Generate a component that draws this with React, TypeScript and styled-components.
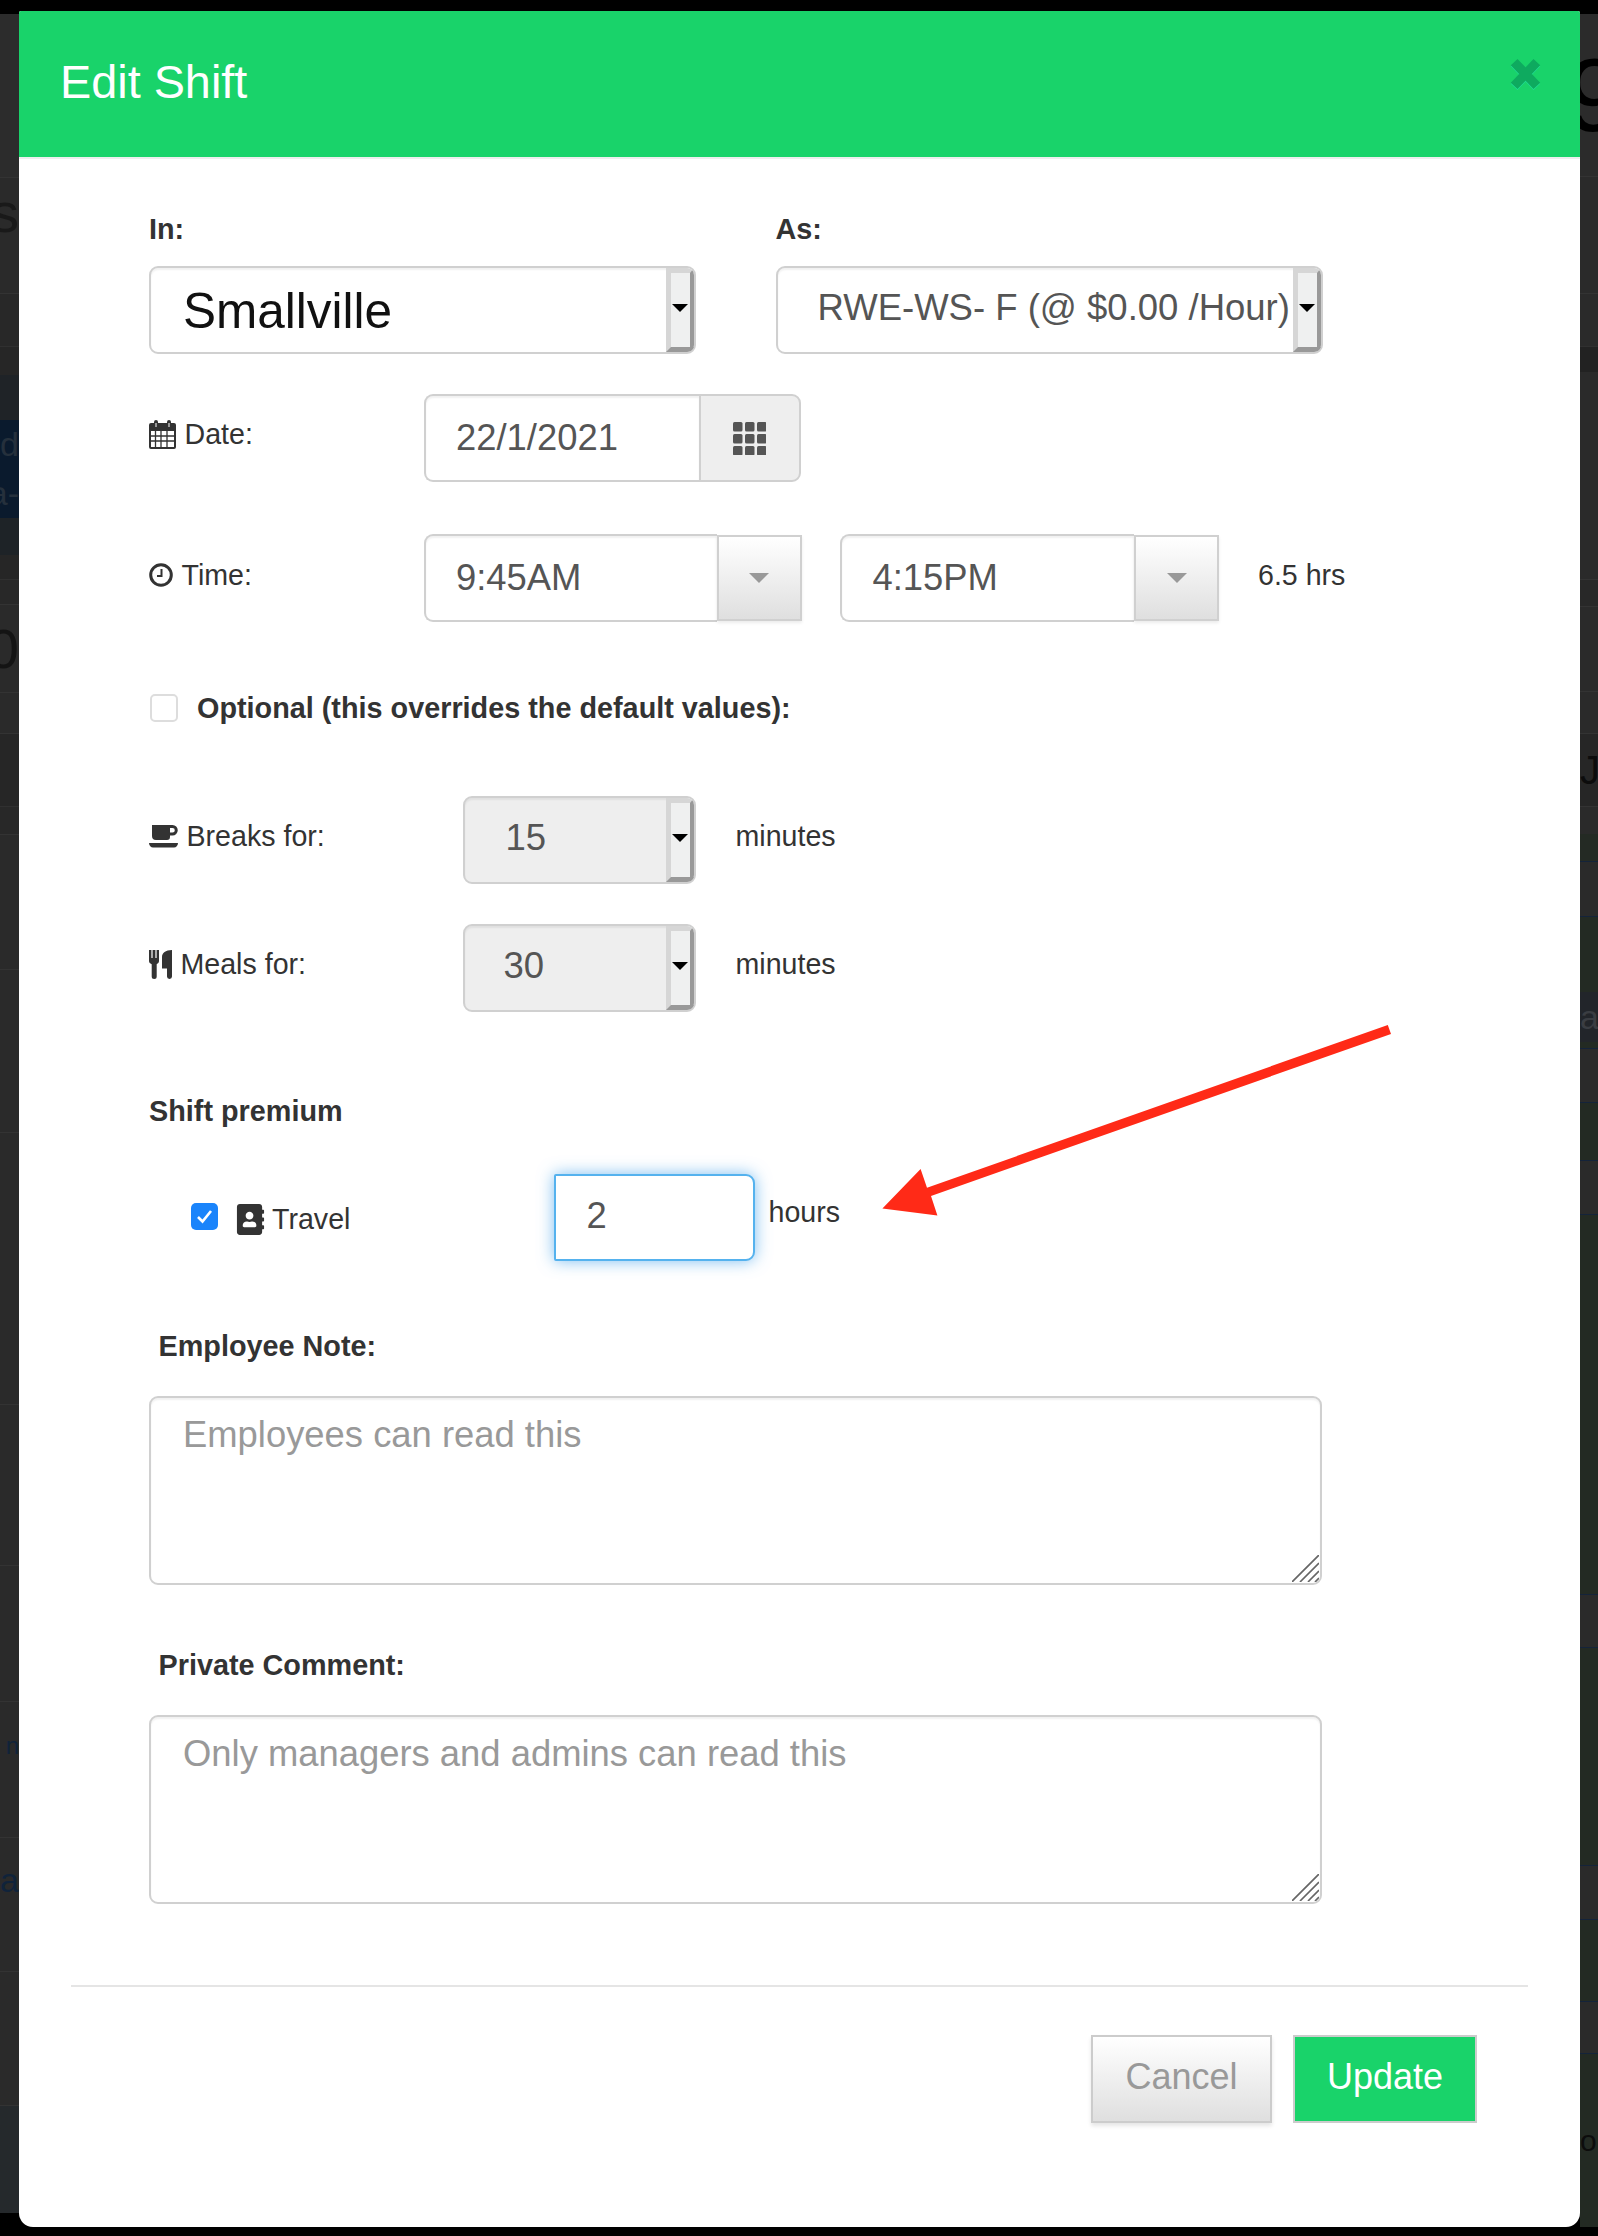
import React from "react";
import styled, { createGlobalStyle } from "styled-components";
import { FaAddressBook } from "react-icons/fa";

type StripRowData = { end: number; bg: string; text?: string; ink?: string; size?: number; line?: string; shift?: number };

const leftRows: StripRowData[] = [
  { end: 14, bg: "#000" },
  { end: 178, bg: "#2c2c2c", line: "#333" },
  { end: 248, bg: "#2a2a2a", text: "s", ink: "#191919" },
  { end: 294, bg: "#2a2a2a", line: "#333" },
  { end: 347, bg: "#282828", line: "#303030" },
  { end: 375, bg: "#262626" },
  { end: 420, bg: "#1f2327" },
  { end: 468, bg: "#0a1a2d", text: "d", ink: "#25303c", size: 34, shift: -8 },
  { end: 518, bg: "#0a1a2d", text: "a-", ink: "#25303c", size: 34, shift: -8 },
  { end: 555, bg: "#1e2327" },
  { end: 580, bg: "#262626", line: "#303030" },
  { end: 605, bg: "#282828", line: "#333" },
  { end: 693, bg: "#2a2a2a", text: "0", ink: "#141414", line: "#333" },
  { end: 734, bg: "#2a2a2a", line: "#333" },
  { end: 807, bg: "#262626", line: "#303030" },
  { end: 835, bg: "#282828", line: "#333" },
  { end: 970, bg: "#2a2a2a", line: "#333" },
  { end: 1133, bg: "#2a2a2a", line: "#333" },
  { end: 1405, bg: "#2a2a2a", line: "#333" },
  { end: 1566, bg: "#2a2a2a", line: "#333" },
  { end: 1702, bg: "#2a2a2a", line: "#333" },
  { end: 1790, bg: "#2a2a2a", text: "n", ink: "#10233a", size: 24 },
  { end: 1838, bg: "#2a2a2a", line: "#333" },
  { end: 1922, bg: "#2a2a2a", text: "a", ink: "#10233a", size: 34 },
  { end: 1972, bg: "#2a2a2a", line: "#333" },
  { end: 2106, bg: "#2a2a2a", line: "#333" },
  { end: 2213, bg: "#25292c" },
  { end: 2236, bg: "#000" },
];

const rightRows: StripRowData[] = [
  { end: 14, bg: "#000" },
  { end: 177, bg: "#2b2b2b", text: "9", ink: "#000", size: 104, line: "#333", shift: -14 },
  { end: 294, bg: "#2a2a2a", line: "#333" },
  { end: 347, bg: "#2a2a2a", line: "#303030" },
  { end: 372, bg: "#222" },
  { end: 580, bg: "#2a2a2a", line: "#333" },
  { end: 607, bg: "#282828", line: "#333" },
  { end: 692, bg: "#2a2a2a", line: "#333" },
  { end: 734, bg: "#2a2a2a", line: "#333" },
  { end: 807, bg: "#262626", text: "J", ink: "#0c0c0c", size: 40, line: "#333" },
  { end: 834, bg: "#2a2a2a" },
  { end: 862, bg: "#242a24", line: "#14233a" },
  { end: 917, bg: "#2a2a2a", line: "#14233a" },
  { end: 992, bg: "#232a23" },
  { end: 1042, bg: "#22252a", text: "a", ink: "#3a3d42", size: 34 },
  { end: 1049, bg: "#232a23", line: "#14233a" },
  { end: 1103, bg: "#2a2a2a", line: "#14233a" },
  { end: 1161, bg: "#232a23", line: "#14233a" },
  { end: 1215, bg: "#2a2a2a", line: "#14233a" },
  { end: 1537, bg: "#232a23" },
  { end: 1595, bg: "#232a23", line: "#14233a" },
  { end: 1648, bg: "#2a2a2a", line: "#14233a" },
  { end: 1866, bg: "#232a23", line: "#14233a" },
  { end: 1920, bg: "#2a2a2a", line: "#14233a" },
  { end: 2002, bg: "#232a23", line: "#14233a" },
  { end: 2054, bg: "#2a2a2a", line: "#14233a" },
  { end: 2227, bg: "#232a23", text: "o", ink: "#0c0c0c", size: 30 },
  { end: 2236, bg: "#000" },
];

const BackgroundStrip: React.FC<{ rows: StripRowData[]; side: "left" | "right" }> = ({ rows, side }) => (
  <Strip $side={side}>
    {rows.map((row, i) => (
      <StripRow
        key={row.end}
        $h={row.end - (i === 0 ? 0 : rows[i - 1].end)}
        $bg={row.bg}
        $line={row.line}
        $side={side}
      >
        {row.text && (
          <StripText $ink={row.ink || "#111"} $size={row.size || 56} $shift={row.shift || 0}>
            {row.text}
          </StripText>
        )}
      </StripRow>
    ))}
  </Strip>
);

const CalendarIcon = () => (
  <IconSvg $w={27} $h={29} viewBox="0 0 27 29">
    <path
      fill="#333"
      fillRule="evenodd"
      d="M2 3h3V2a2 2 0 0 1 4 0v1h9V2a2 2 0 0 1 4 0v1h3a2 2 0 0 1 2 2v22a2 2 0 0 1-2 2H2a2 2 0 0 1-2-2V5a2 2 0 0 1 2-2Zm0 8v16h23V11Z"
    />
    <path stroke="#333" strokeWidth="1.3" d="M1 16h25M1 21h25M6.5 11v17M12 11v17M18 11v17" />
    <path stroke="#fff" strokeWidth="1" d="M7 3v4M20 3v4" />
  </IconSvg>
);

const ClockIcon = () => (
  <IconSvg $w={24} $h={24} viewBox="0 0 24 24">
    <circle cx="12" cy="12" r="10.3" fill="none" stroke="#333" strokeWidth="3" />
    <path d="M12.5 6v7H8" fill="none" stroke="#333" strokeWidth="2" />
  </IconSvg>
);

const CoffeeIcon = () => (
  <IconSvg $w={29} $h={23} viewBox="0 0 29 23">
    <path
      fill="#333"
      fillRule="evenodd"
      d="M3 0h20.5a5 5 0 0 1 0 10.5H21V12a3 3 0 0 1-3 3H7a4 4 0 0 1-4-4Zm18 3v4.6h2.5a2.3 2.3 0 0 0 0-4.6Z"
    />
    <path fill="#333" d="M0 18h29c0 2.5-2 4.5-4 4.5H4c-2 0-4-2-4-4.5Z" />
  </IconSvg>
);

const MealsIcon = () => (
  <IconSvg $w={23} $h={29} viewBox="0 0 23 29">
    <path
      fill="#333"
      d="M0 0h2.4v8h1.2V0h2.8v8h1.200V0H10v11c0 1.500-1 2.500-2.300 3.200V26.500a2.500 2.500 0 0 1-5 0V14.200C1 13.500 0 12.500 0 11Z"
    />
    <path fill="#333" d="M23 0v26.500a2.500 2.500 0 0 1-5 0V18.500h-5V7c0-4 3.500-7 10-7Z" />
  </IconSvg>
);

const GridIcon = () => (
  <IconSvg $w={33} $h={33} viewBox="0 0 33 33">
    {[0, 12, 24].map((y) =>
      [0, 12, 24].map((x) => <rect key={`${x}-${y}`} x={x} y={y} width="9.5" height="9.5" rx="1.5" fill="#555" />)
    )}
  </IconSvg>
);

const ResizeGrip = () => (
  <Grip viewBox="0 0 27 27">
    <path stroke="#666" strokeWidth="1.7" d="M0 27 27 0M8 27 27 8M16 27 27 16M23 27l4-4" />
  </Grip>
);

const Select: React.FC<{ text: string; muted?: boolean; big?: boolean; width: number; inset: number }> = ({
  text,
  muted,
  big,
  width,
  inset,
}) => (
  <SelectBox $muted={muted} $width={width}>
    <SelectText $big={big} $inset={inset}>
      {text}
    </SelectText>
    <Spinner />
  </SelectBox>
);

const TimePicker: React.FC<{ value: string; width: number }> = ({ value, width }) => (
  <InputGroup>
    <InputField $width={width}>{value}</InputField>
    <DropButton>
      <Caret />
    </DropButton>
  </InputGroup>
);

export default function App() {
  return (
    <>
      <GlobalStyle />
      <Page>
        <BackgroundStrip rows={leftRows} side="left" />
        <Modal>
          <Header>
            <Title>Edit Shift</Title>
            <CloseIcon viewBox="0 0 30 31">
              <path d="M4 4l22 23M26 4 4 27" stroke="#0eaa5f" strokeWidth="9" fill="none" />
            </CloseIcon>
          </Header>
          <Form>
            <SelectRow>
              <SelectColumn>
                <BoldLabel>In:</BoldLabel>
                <Select text="Smallville" big width={547} inset={32} />
              </SelectColumn>
              <SelectColumn>
                <BoldLabel>As:</BoldLabel>
                <Select text="RWE-WS- F (@ $0.00 /Hour)" width={547} inset={40} />
              </SelectColumn>
            </SelectRow>

            <Row $top={40} $h={88}>
              <FieldLabel $w={274.5} $lift={8}>
                <CalendarIcon />
                Date:
              </FieldLabel>
              <InputGroup>
                <InputField $width={275}>22/1/2021</InputField>
                <AddOn>
                  <GridIcon />
                </AddOn>
              </InputGroup>
            </Row>

            <Row $top={52} $h={88}>
              <FieldLabel $w={274.5} $lift={6}>
                <ClockIcon />
                Time:
              </FieldLabel>
              <TimePicker value="9:45AM" width={293} />
              <TimeGap />
              <TimePicker value="4:15PM" width={294} />
              <Note $left={39} $lift={6}>
                6.5 hrs
              </Note>
            </Row>

            <Row $top={66} $h={40}>
              <EmptyCheck />
              <OptionalText>Optional (this overrides the default values):</OptionalText>
            </Row>

            <Row $top={68} $h={88}>
              <FieldLabel $w={313.5} $lift={8}>
                <CoffeeIcon />
                Breaks for:
              </FieldLabel>
              <Select text="15" muted width={233} inset={41} />
              <Note $left={40} $lift={8}>
                minutes
              </Note>
            </Row>

            <Row $top={40} $h={88}>
              <FieldLabel $w={313.5} $lift={8}>
                <MealsIcon />
                Meals for:
              </FieldLabel>
              <Select text="30" muted width={233} inset={39} />
              <Note $left={40} $lift={8}>
                minutes
              </Note>
            </Row>

            <Row $top={79} $h={40}>
              <BoldLabel>Shift premium</BoldLabel>
            </Row>

            <Row $top={43} $h={87}>
              <PremiumLabel>
                <TickedCheck>
                  <svg width="17" height="15" viewBox="0 0 17 15">
                    <path d="M2 8l4.5 4.5L15 2" fill="none" stroke="#fff" strokeWidth="2.6" />
                  </svg>
                </TickedCheck>
                <FaAddressBook size={31} color="#333" />
                Travel
              </PremiumLabel>
              <FocusedInput>2</FocusedInput>
              <Note $left={14} $lift={10}>
                hours
              </Note>
            </Row>

            <NoteLabel $top={65}>Employee Note:</NoteLabel>
            <TextArea>
              Employees can read this
              <ResizeGrip />
            </TextArea>

            <NoteLabel $top={60}>Private Comment:</NoteLabel>
            <TextArea>
              Only managers and admins can read this
              <ResizeGrip />
            </TextArea>
          </Form>
          <Divider />
          <Footer>
            <CancelButton>Cancel</CancelButton>
            <UpdateButton>Update</UpdateButton>
          </Footer>
        </Modal>
        <BackgroundStrip rows={rightRows} side="right" />
        <Arrow viewBox="0 0 530 210">
          <path fill="#ff2a17" d="M517.8 5 521 14 61 176 67.4 195.5 12.4 188.6 50.6 149 57 167.8Z" />
        </Arrow>
      </Page>
    </>
  );
}

const GlobalStyle = createGlobalStyle`
  html, body {
    margin: 0;
    background: #000;
  }
  * {
    box-sizing: border-box;
  }
`;

const Page = styled.div`
  position: relative;
  display: flex;
  width: 1598px;
  height: 2236px;
  overflow: hidden;
  background: #000;
  font-family: "Liberation Sans", Arial, sans-serif;
  font-size: 28.6px;
  color: #333;
`;

const Strip = styled.div<{ $side: string }>`
  flex: 0 0 ${(p) => (p.$side === "left" ? "19px" : "18px")};
  display: flex;
  flex-direction: column;
  overflow: hidden;
`;

const StripRow = styled.div<{ $h: number; $bg: string; $line?: string; $side: string }>`
  flex: 0 0 ${(p) => p.$h}px;
  min-height: 0;
  overflow: hidden;
  display: flex;
  align-items: center;
  justify-content: ${(p) => (p.$side === "left" ? "flex-end" : "flex-start")};
  background: ${(p) => p.$bg};
  border-bottom: ${(p) => (p.$line ? `1px solid ${p.$line}` : "none")};
`;

const StripText = styled.span<{ $ink: string; $size: number; $shift: number }>`
  flex: none;
  margin-left: ${(p) => p.$shift}px;
  color: ${(p) => p.$ink};
  font-size: ${(p) => p.$size}px;
  line-height: 1;
  white-space: nowrap;
`;

const Modal = styled.div`
  flex: 0 0 1561px;
  height: 2216px;
  margin-top: 11px;
  background: #fff;
  border-radius: 2px 2px 14px 14px;
  overflow: hidden;
`;

const Header = styled.div`
  position: relative;
  height: 148px;
  display: flex;
  align-items: center;
  padding: 0 0 4px 41px;
  background: #19d36a;
  border-bottom: 2px solid #eee;
`;

const Title = styled.h1`
  margin: 0;
  color: #fff;
  font-size: 46.8px;
  font-weight: 400;
`;

const CloseIcon = styled.svg`
  position: absolute;
  right: 39px;
  top: 47px;
  width: 31px;
  height: 32px;
  filter: drop-shadow(0 1px 0 #20dc96);
`;

const Form = styled.div`
  padding-left: 130px;
`;

const SelectRow = styled.div`
  display: flex;
  gap: 79.5px;
  margin-top: 50px;
`;

const SelectColumn = styled.div`
  display: flex;
  flex-direction: column;
  gap: 17px;
`;

const BoldLabel = styled.div`
  height: 40px;
  line-height: 40px;
  font-size: 28.8px;
  font-weight: 700;
`;

const SelectBox = styled.div<{ $muted?: boolean; $width: number }>`
  width: ${(p) => p.$width}px;
  height: 88px;
  display: flex;
  align-items: stretch;
  background: ${(p) => (p.$muted ? "#eee" : "#fff")};
  border: 2.5px solid #d0d0d0;
  border-radius: 9px;
  overflow: hidden;
  box-shadow: inset 0 2px 2px rgba(0, 0, 0, 0.06);
`;

const SelectText = styled.div<{ $big?: boolean; $inset: number }>`
  flex: 1;
  min-width: 0;
  padding-left: ${(p) => p.$inset}px;
  padding-bottom: ${(p) => (p.$big ? 0 : 4)}px;
  align-self: center;
  white-space: nowrap;
  font-size: ${(p) => (p.$big ? 49.5 : 36.5)}px;
  color: ${(p) => (p.$big ? "#111" : "#555")};
`;

const Spinner = styled.div`
  position: relative;
  flex: 0 0 28px;
  background: #eff0f0;
  border-style: solid;
  border-width: 5px 4px 5px 5px;
  border-color: #d6d6d6 #999 #999 #d6d6d6;

  &::after {
    content: "";
    position: absolute;
    left: 1px;
    top: 50%;
    margin-top: -6px;
    border-style: solid;
    border-width: 8px 8px 0;
    border-color: #000 transparent transparent;
  }
`;

const Row = styled.div<{ $top: number; $h: number }>`
  display: flex;
  align-items: center;
  margin-top: ${(p) => p.$top}px;
  height: ${(p) => p.$h}px;
`;

const FieldLabel = styled.div<{ $w: number; $lift: number }>`
  flex: 0 0 ${(p) => p.$w}px;
  display: flex;
  align-items: center;
  gap: 8.5px;
  padding-bottom: ${(p) => p.$lift}px;
`;

const IconSvg = styled.svg<{ $w: number; $h: number }>`
  display: block;
  flex: none;
  width: ${(p) => p.$w}px;
  height: ${(p) => p.$h}px;
`;

const InputGroup = styled.div`
  display: flex;
  height: 88px;
`;

const InputField = styled.div<{ $width: number }>`
  width: ${(p) => p.$width}px;
  height: 88px;
  display: flex;
  align-items: center;
  padding-left: 30.5px;
  font-size: 36.4px;
  color: #555;
  background: #fff;
  border: 2.5px solid #d0d0d0;
  border-right: none;
  border-radius: 9px 0 0 9px;
  box-shadow: inset 0 2px 2px rgba(0, 0, 0, 0.06);
`;

const AddOn = styled.div`
  flex: 0 0 102px;
  display: flex;
  align-items: center;
  justify-content: center;
  background: #eee;
  border: 2.5px solid #d0d0d0;
  border-radius: 0 9px 9px 0;
`;

const DropButton = styled.div`
  width: 85px;
  height: 86px;
  margin-top: 1px;
  display: flex;
  align-items: center;
  justify-content: center;
  background: linear-gradient(#fff, #dfdfdf);
  border: 2px solid #d0d0d0;
  box-shadow: 0 2px 3px rgba(0, 0, 0, 0.08);
`;

const Caret = styled.span`
  border-style: solid;
  border-width: 10px 10px 0;
  border-color: #999 transparent transparent;
`;

const TimeGap = styled.div`
  flex: 0 0 38.5px;
`;

const Note = styled.div<{ $left: number; $lift: number }>`
  margin-left: ${(p) => p.$left}px;
  padding-bottom: ${(p) => p.$lift}px;
`;

const EmptyCheck = styled.span`
  width: 28px;
  height: 28px;
  margin: 0 19px 0 1px;
  border: 2px solid #ddd;
  border-radius: 5px;
  background: #fff;
`;

const OptionalText = styled.div`
  font-size: 28.8px;
  font-weight: 700;
`;

const PremiumLabel = styled.div`
  flex: 0 0 404.5px;
  display: flex;
  align-items: center;
  padding: 4px 0 0 42px;
  gap: 6px;
`;

const TickedCheck = styled.span`
  width: 27px;
  height: 27px;
  margin: -6px 11px 0 0;
  display: flex;
  align-items: center;
  justify-content: center;
  border-radius: 5px;
  background: #1a84fb;
`;

const FocusedInput = styled.div`
  width: 201px;
  height: 87px;
  display: flex;
  align-items: center;
  padding: 0 0 4px 31px;
  font-size: 36.4px;
  color: #555;
  background: #fff;
  border: 2.5px solid #55b2ee;
  border-radius: 2px 9px 9px 2px;
  box-shadow: 0 0 16px rgba(82, 168, 236, 0.75);
`;

const NoteLabel = styled.div<{ $top: number }>`
  height: 40px;
  line-height: 40px;
  margin: ${(p) => p.$top}px 0 30px 9.5px;
  font-size: 28.8px;
  font-weight: 700;
`;

const TextArea = styled.div`
  position: relative;
  width: 1173px;
  height: 189px;
  padding: 13px 32px;
  font-size: 36.4px;
  line-height: 48px;
  color: #999;
  background: #fff;
  border: 2.5px solid #d0d0d0;
  border-radius: 9px;
  box-shadow: inset 0 2px 2px rgba(0, 0, 0, 0.06);
`;

const Grip = styled.svg`
  position: absolute;
  right: 1px;
  bottom: 1px;
  width: 27px;
  height: 27px;
`;

const Divider = styled.div`
  height: 2px;
  margin: 81px 52px 0;
  background: #e5e5e5;
`;

const Footer = styled.div`
  display: flex;
  justify-content: flex-end;
  gap: 21px;
  margin-top: 48px;
  padding-right: 103px;
`;

const CancelButton = styled.div`
  width: 181px;
  height: 88px;
  display: flex;
  align-items: center;
  justify-content: center;
  padding-bottom: 4px;
  font-size: 36px;
  color: #999;
  background: linear-gradient(#fff, #dfdfdf);
  border: 2.5px solid #ccc;
  box-shadow: 0 3px 4px rgba(0, 0, 0, 0.1);
`;

const UpdateButton = styled(CancelButton)`
  width: 184px;
  color: #fff;
  background: #19d36a;
  box-shadow: none;
`;

const Arrow = styled.svg`
  position: absolute;
  left: 870px;
  top: 1020px;
  width: 530px;
  height: 210px;
`;
